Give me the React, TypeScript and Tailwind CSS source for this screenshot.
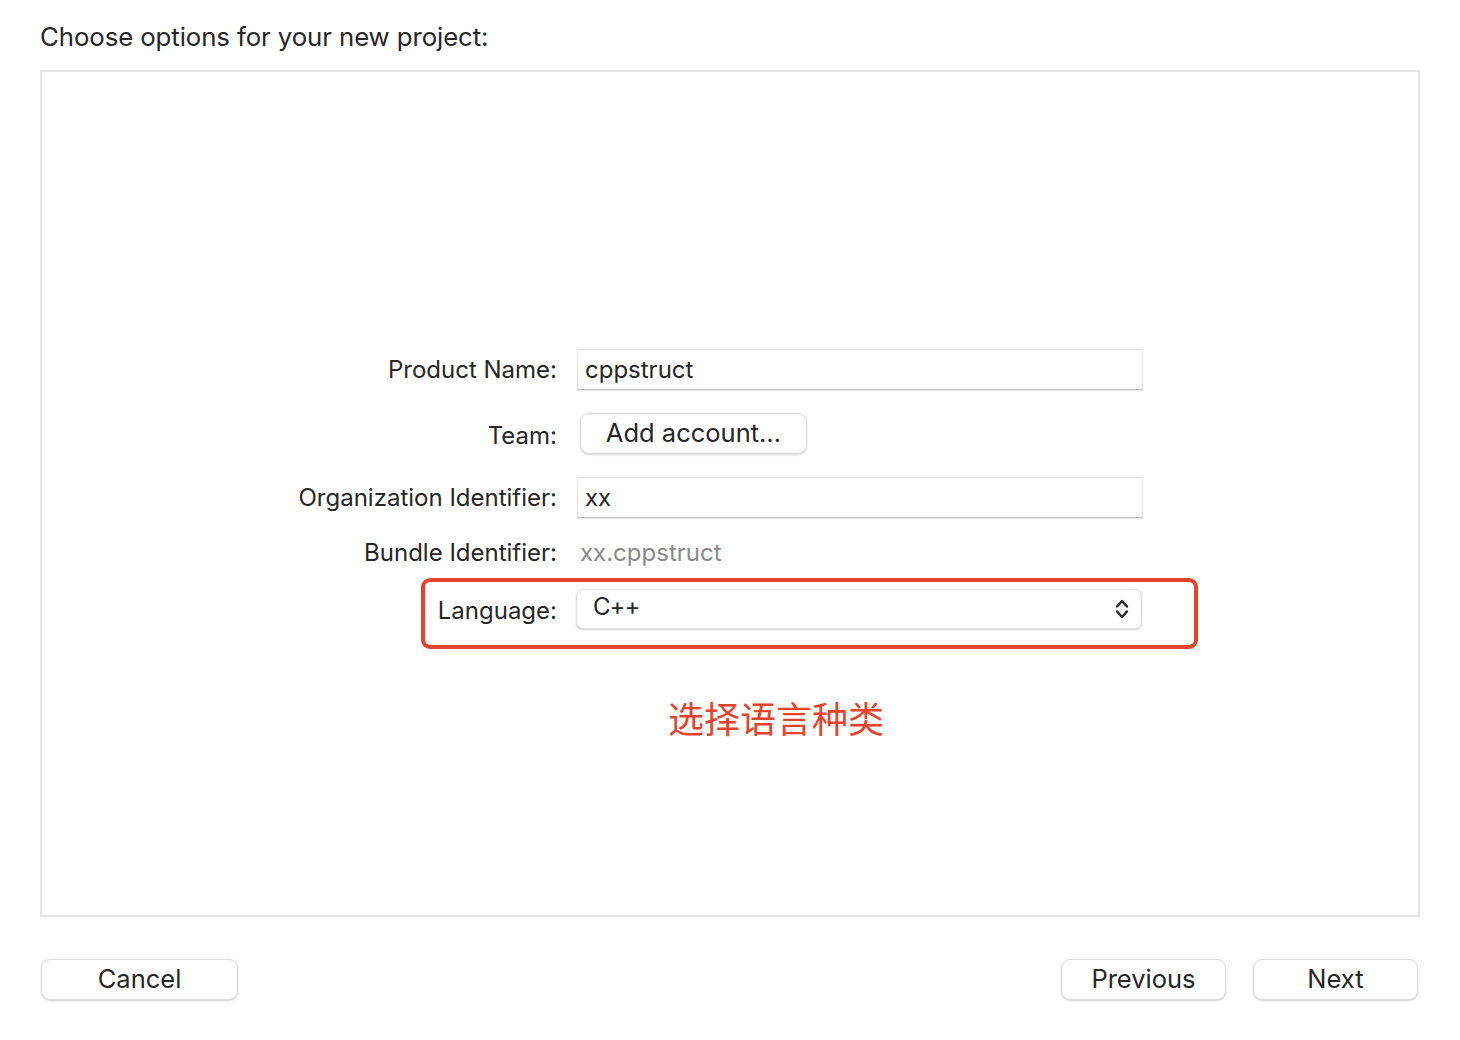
import React from "react";

const LABEL = "text-right text-[24px] text-[#262626]";

function Chevrons() {
  return (
    <svg width="16" height="24" viewBox="0 0 16 24" fill="none" aria-hidden="true">
      <path d="M3 9.5 L8 4 L13 9.5" stroke="#262626" strokeWidth="2.4" strokeLinecap="round" strokeLinejoin="round" />
      <path d="M3 14.5 L8 20 L13 14.5" stroke="#262626" strokeWidth="2.4" strokeLinecap="round" strokeLinejoin="round" />
    </svg>
  );
}

function MacButton({ children, className }: { children: React.ReactNode; className: string }) {
  return (
    <button
      className={
        "flex h-[41px] items-center justify-center rounded-[9px] border border-[#dcdcdc] bg-white text-[25.5px] text-[#262626] shadow-[0_1px_2px_rgba(0,0,0,0.18)] " +
        className
      }
    >
      {children}
    </button>
  );
}

function TextField({ value }: { value: string }) {
  return (
    <div className="flex h-[41px] w-[566px] items-center border border-[#e6e6e6] border-b-[#bdbdbd] bg-white pl-[7px] text-[24px] text-[#262626] shadow-[0_1px_1px_rgba(0,0,0,0.08)]">
      {value}
    </div>
  );
}

export default function App() {
  return (
    <div
      className="h-[1040px] w-[1460px] bg-white pl-[40px] pr-[40px] pt-[20px]"
      style={{ fontFamily: "Inter, 'Noto Sans CJK SC', sans-serif" }}
    >
      <h1 className="h-[50px] text-[25.8px] leading-[34px] tracking-[-0.1px] text-[#262626]">
        Choose options for your new project:
      </h1>

      <div className="flex h-[847px] w-[1380px] flex-col border-2 border-[#e3e3e3] pt-[277px]">
        <div className="grid grid-cols-[515px_1fr] items-center gap-x-5">
          <div className={LABEL}>Product Name:</div>
          <TextField value="cppstruct" />
        </div>

        <div className="mt-[23px] grid h-[41px] grid-cols-[515px_1fr] items-center gap-x-5">
          <div className={LABEL + " pt-[4px]"}>Team:</div>
          <MacButton className="ml-[3px] w-[227px]">Add account…</MacButton>
        </div>

        <div className="mt-[23px] grid grid-cols-[515px_1fr] items-center gap-x-5">
          <div className={LABEL}>Organization Identifier:</div>
          <TextField value="xx" />
        </div>

        <div className="mt-[14px] grid h-[41px] grid-cols-[515px_1fr] items-center gap-x-5">
          <div className={LABEL}>Bundle Identifier:</div>
          <div className="pl-[3px] text-[24px] text-[#8a8a8a]">xx.cppstruct</div>
        </div>

        <div className="relative mt-[16px] grid h-[40px] grid-cols-[515px_1fr] items-center gap-x-5">
          <div className={LABEL + " pt-[4px]"}>Language:</div>
          <div className="-ml-[1px] flex h-[40px] w-[566px] items-center justify-between rounded-[7px] border border-[#e0e0e0] bg-white pl-[16px] pr-[11px] text-[24px] text-[#262626] shadow-[0_1px_2px_rgba(0,0,0,0.2)]">
            <span className="-mt-[4px] tracking-[-1px]">C++</span>
            <Chevrons />
          </div>
          <div className="pointer-events-none absolute left-[379px] top-[-11px] h-[71px] w-[777px] rounded-[9px] border-[4px] border-[#e5432b]" />
        </div>

        <div
          className="ml-[626px] mt-[68px] text-[36px] leading-[40px] text-[#e5432b]"
          style={{ fontFamily: "'Noto Sans CJK SC', sans-serif" }}
        >
          选择语言种类
        </div>
      </div>

      <div className="mt-[42px] flex items-center pr-[2px]">
        <MacButton className="ml-[1px] w-[197px]">Cancel</MacButton>
        <div className="ml-auto flex gap-[27px]">
          <MacButton className="w-[165px]">Previous</MacButton>
          <MacButton className="w-[165px]">Next</MacButton>
        </div>
      </div>
    </div>
  );
}
